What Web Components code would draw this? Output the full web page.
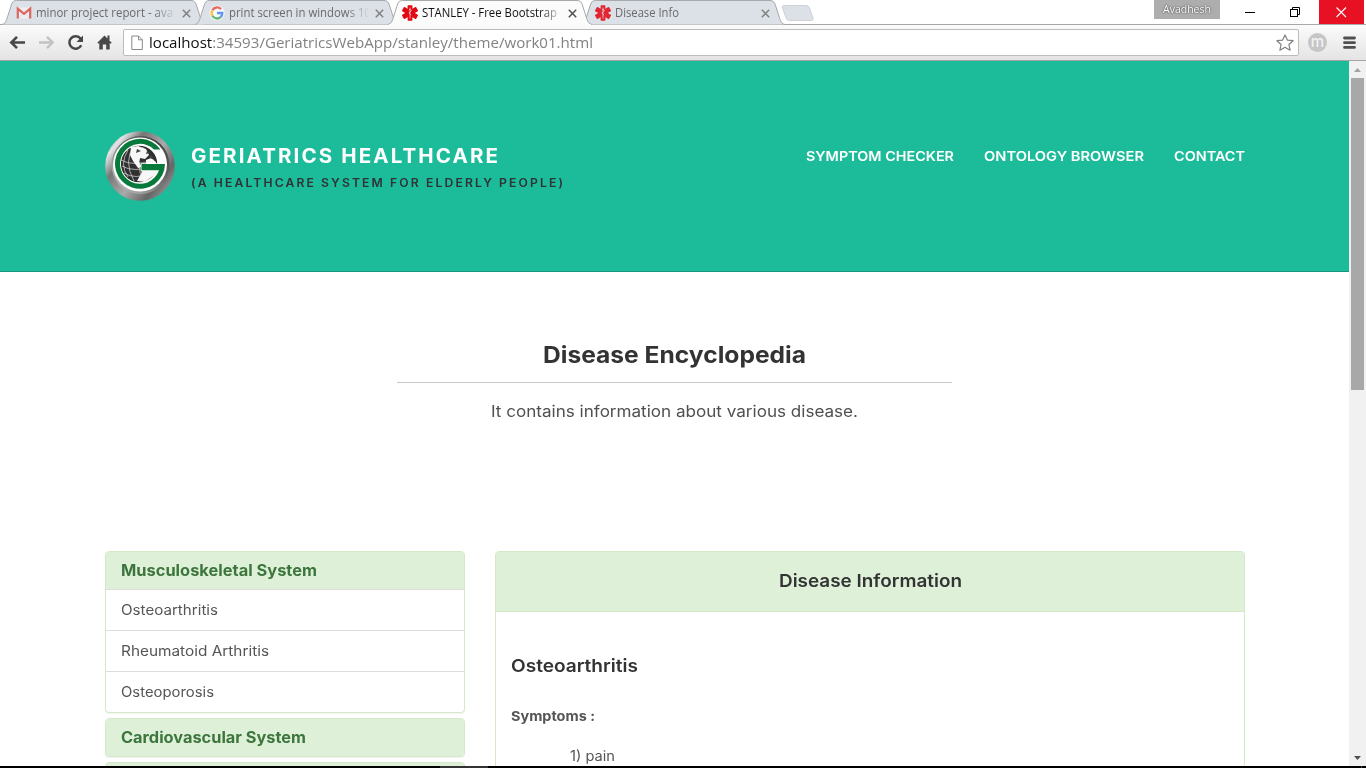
<!DOCTYPE html>
<html lang="en"><head><meta charset="utf-8"><title>STANLEY - Free Bootstrap</title>
<style>html,body{margin:0;height:768px;overflow:hidden;background:#fff}body{font-family:Inter,sans-serif}</style></head>
<body><app-window></app-window>
<script>
function define(name, html, setup){
  customElements.define(name, class extends HTMLElement{
    connectedCallback(){
      if(this.shadowRoot) return;
      const r=this.attachShadow({mode:'open'});
      r.innerHTML=html;
      if(setup) setup(this,r);
    }
  });
}

/* Single line of text, stretched horizontally to the measure given in w */
define('fit-text',`<style>:host{display:block;white-space:nowrap;flex:none}span{display:inline-block;transform-origin:0 50%;vertical-align:top}</style><span><slot></slot></span>`,(el,r)=>{
  const w=+el.getAttribute('w'), s=r.querySelector('span');
  el.style.width=w+'px';
  const ls=parseFloat(getComputedStyle(el).letterSpacing)||0;
  const n=s.getBoundingClientRect().width-ls;
  if(n>0) s.style.transform='scaleX('+(w/n)+')';
});

const starOfLife=`<g fill="#e30613"><rect x="5.600" y="0.3" width="4.800" height="15.400" rx=".6"/><rect x="5.600" y="-.2" width="4.800" height="16.400" rx=".6" transform="rotate(60 8 8)"/><rect x="5.600" y="-.2" width="4.800" height="16.400" rx=".6" transform="rotate(-60 8 8)"/></g><path d="M8 2.500V13.500M7 5.200C7.200 4 9.400 4.200 9.300 5.300C9.200 6.600 7 6.800 7.100 8C7.200 9.200 8.900 9 8.700 10.200" fill="none" stroke="#fff" stroke-opacity=".85" stroke-width=".7"/>`;
const favicons={
  gmail:`<rect x="1" y="2.5" width="14" height="11" rx="1" fill="#f2f2f2"/><path d="M2.8 13.3 7 8.5M13.2 13.3 9 8.5" stroke="#d8d8d8" stroke-width=".8"/><path d="M1.8 13.5V3.6L8 8.8l6.2-5.2v9.9" fill="none" stroke="#dd5147" stroke-width="2.2"/>`,
  google:`<circle cx="8" cy="8" r="7.6" fill="#fff"/><g fill="none" stroke-width="2.4"><path d="M12 4.1A5.3 5.3 0 0 0 3.4 5.3" stroke="#ea5548"/><path d="M3.4 5.3a5.3 5.3 0 0 0 0 5.4" stroke="#fbc02d"/><path d="M3.4 10.7a5.3 5.3 0 0 0 8.2 1.4" stroke="#4caf60"/><path d="M11.6 12.1A5.3 5.3 0 0 0 13.3 8H8" stroke="#4c8bf5"/></g>`,
  star:starOfLife
};
define('browser-tab',`<style>
:host{display:grid;width:204px;height:25px;margin-right:-11px;flex:none;font:12px/24px "Open Sans",sans-serif;color:#6a6a6a;position:relative}
:host([active]){color:#111;z-index:2}
svg.bg,.row{grid-area:1/1}
.row{display:flex;align-items:center;padding:1px 0 0 14px}
.row svg{flex:none}.t{width:139px;margin-left:4px;overflow:hidden;-webkit-mask:linear-gradient(90deg,#000 118px,transparent 141px)}
.x{margin-left:7px}.fav{opacity:.85}:host([active]) .fav{opacity:1}
</style><svg class="bg" width="204" height="25"><path class="p" d="M0 24.5C3 24 4 21.5 5 18.5L9.3 5C10.2 2 11.500.5 14.500.5H189C192 .5 193.400 2 194.400 5L198.700 18.500C199.700 21.500 200.700 24 204 24.500" fill="#dce1e8" stroke="#a6a8ab"/></svg>
<div class="row"><svg class="fav" width="16" height="16" viewBox="0 0 16 16"></svg><div class="t"><slot></slot></div><svg class="x" width="9" height="9"><path d="M.8.8 8.200 8.200M8.200.8.8 8.200" stroke="#808080" stroke-width="1.500"/></svg></div>`,(el,r)=>{
  r.querySelector('.fav').innerHTML=favicons[el.getAttribute('icon')];
  if(el.hasAttribute('active')){r.querySelector('.p').setAttribute('fill','#fbfbfb');r.querySelector('.x path').setAttribute('stroke','#505050');
    r.querySelector('.bg').insertAdjacentHTML('beforeend','<path d="M1 24.500H203" stroke="#fbfbfb"/>');}
});

define('window-controls',`<style>:host{display:flex;margin-left:auto;height:24px;position:relative;z-index:3;padding-right:2px}
.user{width:66px;height:19px;background:#adadad;color:#fff;font:11px/18px "Open Sans",sans-serif;box-sizing:border-box;padding-left:9px;margin-right:7px;text-shadow:0 0 2px #444,0 0 1px #555}
</style><div class="user"><fit-text w="48">Avadhesh</fit-text></div>
<svg width="92" height="24" fill="none" stroke="#000"><path d="M18 12.500H28"/><rect x="63.500" y="9.500" width="7" height="7"/><path d="M65.500 9V7.500H72.500V14.500H71"/></svg>
<svg width="45" height="24"><path d="M0 0H45V24H0Z" fill="#e81123"/><path d="M17.500 7.500 27 17M27 7.500 17.500 17" stroke="#fff" stroke-width="1.100"/></svg>`);

define('tab-strip',`<style>:host{display:flex;height:25px;padding-left:2px;background:linear-gradient(#fff 24px,#a8a8a8 24px)}.new{margin:4px 0 0 7px;position:relative}</style>
<browser-tab icon="gmail"><fit-text w="137">minor project report - ava</fit-text></browser-tab>
<browser-tab icon="google"><fit-text w="142">print screen in windows 10</fit-text></browser-tab>
<browser-tab icon="star" active><fit-text w="135">STANLEY - Free Bootstrap</fit-text></browser-tab>
<browser-tab icon="star"><fit-text w="64">Disease Info</fit-text></browser-tab>
<svg class="new" width="33" height="18"><path d="M3 1.500H25Q27.500 1.500 28.500 4L32 14Q32.500 16.500 30 16.500H8.500Q6 16.500 5 14L1.500 4Q1 1.500 3 1.500Z" fill="#dce1e8" stroke="#cdd1d6"/></svg>
<window-controls></window-controls>`);

define('tool-bar',`<style>:host{display:flex;height:36px;box-sizing:border-box;border-bottom:1px solid #a5a5a5;background:linear-gradient(#fbfbfb,#e4e4e4);align-items:flex-start}
.nav{width:123px;flex:none}.url{display:flex;align-items:center;box-sizing:border-box;width:1176px;height:27px;margin-top:4px;background:#fff;border:1px solid #bcbcbc;border-radius:2px;padding:0 4px 0 7px;font:15px/25px "Open Sans",sans-serif;color:#828282}
b{font-weight:400;color:#111}fit-text{margin-left:6px}.star{margin-left:auto}
.ext{width:19px;height:19px;border-radius:50%;background:#c6c6c6;color:#f2f2f2;font:500 15px/17px Inter,sans-serif;text-align:center;margin:8px 0 0 9px}.menu{margin:11px 0 0 16px}</style>
<svg class="nav" width="123" height="35" fill="none"><path d="M25 17.500H11.500M17 11.800 11.300 17.500 17 23.200" stroke="#484848" stroke-width="2.600"/><path d="M39 17.500H52.500M47 11.800 52.700 17.500 47 23.200" stroke="#c2c2c2" stroke-width="2.400"/><path d="M80.600 13.800A6.200 6.200 0 1 0 81.200 20.200" stroke="#484848" stroke-width="2.500"/><path d="M83 10.500V17H76.500Z" fill="#484848"/><path d="M97.300 17.700 104.500 10.500 111.700 17.700 110.500 18.700 109.700 18V24.500H106.200V19.500H102.800V24.500H99.300V18L98.500 18.700ZM107.500 10.500H109.500V15H107.500Z" fill="#484848"/></svg>
<div class="url"><svg width="12" height="16" fill="#fff" stroke="#8a8a8a"><path d="M.8 1H7.500L11.300 4.800V14.500H.8ZM7.500 1V4.800H11.300"/></svg><fit-text w="444"><b>localhost</b>:34593/GeriatricsWebApp/stanley/theme/work01.html</fit-text><svg class="star" width="18" height="18"><path d="M9 .9 11.400 6.100 17.100 6.700 12.900 10.500 14.100 16.200 9 13.300 3.900 16.200 5.100 10.500 .9 6.700 6.600 6.100Z" fill="#fff" stroke="#808080" stroke-width="1.200" stroke-linejoin="round"/></svg></div>
<div class="ext">m</div><svg class="menu" width="13" height="14"><path d="M1.500 2H11.500M1.500 6.700H11.500M1.500 11.400H11.500" stroke="#505050" stroke-width="2.800" stroke-linecap="round"/></svg>`);

define('brand-logo',`<style>:host{display:block;width:70px;height:70px;flex:none}svg{display:block}</style>
<svg width="70" height="70" viewBox="0 0 70 70"><defs><linearGradient id="m" x1="0" y1=".1" x2="1" y2=".9"><stop offset="0" stop-color="#666"/><stop offset=".14" stop-color="#e6e6e6"/><stop offset=".3" stop-color="#777"/><stop offset=".55" stop-color="#aaa"/><stop offset=".78" stop-color="#666"/><stop offset="1" stop-color="#aaa"/></linearGradient><linearGradient id="n" x1="1" y1="0" x2="0" y2="1"><stop offset="0" stop-color="#333"/><stop offset=".5" stop-color="#777"/><stop offset="1" stop-color="#c9c9c9"/></linearGradient></defs>
<circle cx="35" cy="35" r="34.800" fill="url(#m)"/><circle cx="35.500" cy="34" r="29" fill="url(#n)"/><circle cx="35" cy="33.500" r="27" fill="#fff"/>
<circle cx="34" cy="33" r="18.300" fill="#303030"/><g fill="none" stroke="#ddd" stroke-width=".7"><path d="M16 29Q28 36 49 29M17 35Q28 42 50 35M19 42Q30 49 46 42M29 15Q18 30 29 50M38 16Q29 33 39 51M23 19Q14 33 23 46"/></g>
<path d="M26 16 33 15 41 18 44 24 40 28 35 27 34 31 37 36 33 37 28 30 25 24ZM41 29 46 27 51 31 51 33H41ZM36.500 33V42L32 50 40 51 48 45 52 40Z" fill="#f7f7f7"/><path d="M32 18 36 20 31 22ZM42 20 45 22 41 23ZM46 24 49 28 44 27Z" fill="#444"/>
<path d="M55.500 18.500H49A20 20 0 1 0 54 39.300H36.500V33H60A25 25 0 1 1 55.500 18.500Z" fill="#07793b" stroke="#fff" stroke-width="1.600" paint-order="stroke"/></svg>`);

define('site-header',`<style>:host{display:flex;height:211px;box-sizing:border-box;background:#1cbc9b;border-bottom:1px solid #16967c;padding:70px 104px 0 105px;color:#fff}
.brand{padding:11px 0 0 16px}.h{font:700 19.500px/28px Inter;letter-spacing:2px}.s{font:600 11.500px/26px Inter;letter-spacing:2px;color:#303235}
nav{display:flex;gap:30px;margin-left:auto;padding-top:11px;font:600 13.600px/28px Inter}</style>
<brand-logo></brand-logo><div class="brand"><fit-text class="h" w="307">GERIATRICS HEALTHCARE</fit-text><fit-text class="s" w="372">(A HEALTHCARE SYSTEM FOR ELDERLY PEOPLE)</fit-text></div>
<nav><fit-text w="148">SYMPTOM CHECKER</fit-text><fit-text w="160">ONTOLOGY BROWSER</fit-text><fit-text w="71">CONTACT</fit-text></nav>`);

define('page-intro',`<style>:host{display:flex;flex-direction:column;align-items:center;height:279px;box-sizing:border-box;padding-top:67px}
.h{font:700 23px/32px Inter;color:#333}hr{width:555px;height:1px;border:0;background:#c8c8c8;margin:11px 0 12px}.p{font:400 16px/32px Inter;color:#505050}</style>
<fit-text class="h" w="263">Disease Encyclopedia</fit-text><hr><fit-text class="p" w="367">It contains information about various disease.</fit-text>`);

define('system-panel',`<style>:host{display:block;box-sizing:border-box;border:1px solid #d6e9c6;border-radius:4px;box-shadow:0 1px 1px rgba(0,0,0,.05);background:#fff;overflow:hidden;color:#555;font:14px/40px Inter}
.head{background:#dff0d8;color:#3c763d;height:37px;padding-left:15px;font:700 15.500px/37px Inter}</style><div class="head"><slot name="title"></slot></div><slot></slot>`);
define('panel-row',`<style>:host{display:block;border-top:1px solid #ddd;padding-left:15px;height:40px}</style><slot></slot>`);

define('info-panel',`<style>:host{display:block;box-sizing:border-box;width:750px;height:400px;border:1px solid #d6e9c6;border-radius:4px;background:#fff;color:#333}
.head{display:flex;justify-content:center;height:59px;background:#dff0d8;border-bottom:1px solid #d6e9c6;font:600 17.500px/58px Inter;border-radius:3px 3px 0 0}
.body{padding:38px 15px}.h{font:600 17.500px/32px Inter}.s{font:700 13.500px/28px Inter;color:#555;margin-top:20px}.i{font:14px/28px Inter;color:#555;margin:12px 0 0 59px}</style>
<div class="head"><fit-text w="183">Disease Information</fit-text></div><div class="body"><fit-text class="h" w="127">Osteoarthritis</fit-text><fit-text class="s" w="84">Symptoms :</fit-text><fit-text class="i" w="45">1) pain</fit-text></div>`);

define('disease-browser',`<style>:host{display:grid;grid-template-columns:360px 750px;column-gap:30px;padding:0 0 0 105px}.list{display:flex;flex-direction:column;gap:5px}</style>
<div class="list"><system-panel><fit-text slot="title" w="196">Musculoskeletal System</fit-text><panel-row><fit-text w="97">Osteoarthritis</fit-text></panel-row><panel-row><fit-text w="148">Rheumatoid Arthritis</fit-text></panel-row><panel-row><fit-text w="93">Osteoporosis</fit-text></panel-row></system-panel>
<system-panel><fit-text slot="title" w="185">Cardiovascular System</fit-text></system-panel><system-panel></system-panel></div><info-panel></info-panel>`);

define('scroll-bar',`<style>:host{display:flex;flex-direction:column;align-items:center;width:17px;flex:none;background:#f1f1f1}.thumb{width:13px;height:312px;background:#a8a8a8}.down{margin-top:auto}</style>
<svg width="17" height="17"><path d="M5 11H12L8.500 7Z" fill="#a3a3a3"/></svg><div class="thumb"></div><svg class="down" width="17" height="17"><path d="M5 7H12L8.500 11Z" fill="#505050"/></svg>`);

define('app-window',`<style>:host{display:flex;flex-direction:column;width:1366px;height:768px;overflow:hidden}tab-strip,tool-bar{flex:none}
.view{display:flex;height:705px;flex:none}main{width:1349px;overflow:hidden}.edge{height:2px;background:linear-gradient(90deg,#000 440px,#333 440px 488px,#000 488px 1361px,#444 1361px 1362px,#000 1362px)}</style>
<tab-strip></tab-strip><tool-bar></tool-bar><div class="view"><main><site-header></site-header><page-intro></page-intro><disease-browser></disease-browser></main><scroll-bar></scroll-bar></div><div class="edge"></div>`);
</script></body></html>
